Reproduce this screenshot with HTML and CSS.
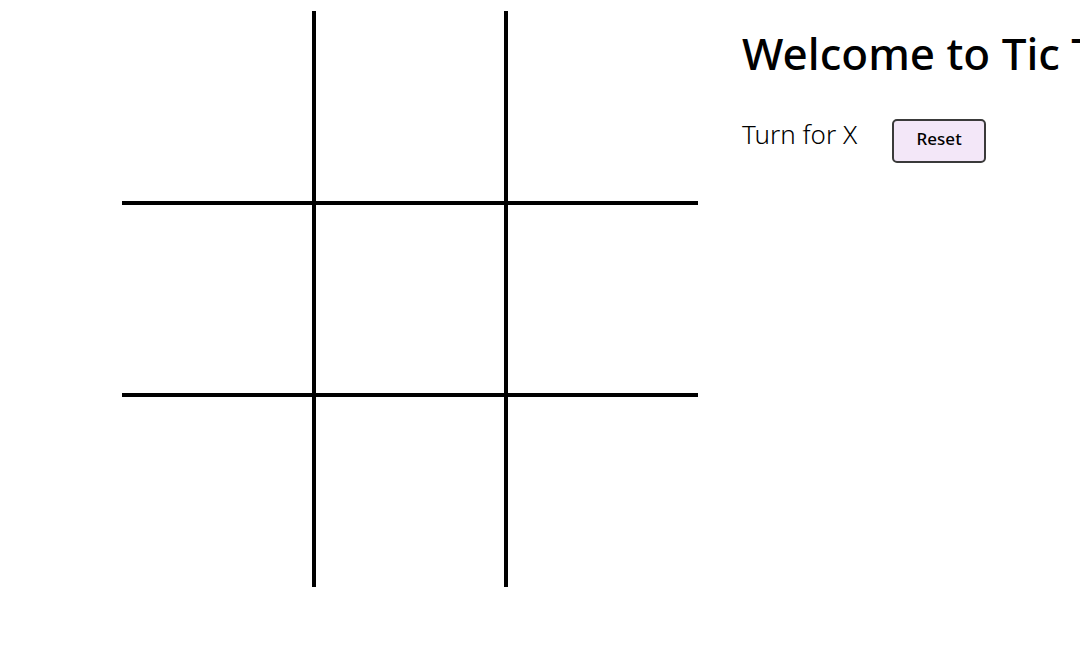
FILE: index.html
```html
<!DOCTYPE html>
<html>
<head>
<meta charset="utf-8">
<link rel="stylesheet" href="styles.css">
</head>
<body>
<div class="page">
  <div class="board">
    <div class="cell c1"></div><div class="cell c2"></div><div class="cell c3"></div>
    <div class="cell c4"></div><div class="cell c5"></div><div class="cell c6"></div>
    <div class="cell c7"></div><div class="cell c8"></div><div class="cell c9"></div>
  </div>
  <div class="info">
    <h1 class="title">Welcome to Tic Tac Toe</h1>
    <div class="status">
      <span class="turn">Turn for X</span>
      <button class="reset">Reset</button>
    </div>
  </div>
</div>
</body>
</html>
```
FILE: styles.css
```css
html, body {
  margin: 0;
  padding: 0;
  background: #fff;
  overflow: hidden;
}
body {
  font-family: "Noto Sans", "Open Sans", sans-serif;
  color: #000;
}
.page {
  display: flex;
  align-items: flex-start;
  padding: 11px 0 0 122px;
  gap: 44px;
  width: 1080px;
  box-sizing: border-box;
}
.board {
  display: grid;
  grid-template-columns: repeat(3, 192px);
  grid-template-rows: repeat(3, 192px);
  flex: none;
}
.cell {
  box-sizing: border-box;
  border: 0 solid #000;
}
.c1 { border-right-width: 2px; border-bottom-width: 2px; }
.c2 { border-left-width: 2px; border-right-width: 2px; border-bottom-width: 2px; }
.c3 { border-left-width: 2px; border-bottom-width: 2px; }
.c4 { border-top-width: 2px; border-right-width: 2px; border-bottom-width: 2px; }
.c5 { border-width: 2px; }
.c6 { border-top-width: 2px; border-left-width: 2px; border-bottom-width: 2px; }
.c7 { border-top-width: 2px; border-right-width: 2px; }
.c8 { border-top-width: 2px; border-left-width: 2px; border-right-width: 2px; }
.c9 { border-top-width: 2px; border-left-width: 2px; }
.info {
  flex: none;
  white-space: nowrap;
}
.title {
  margin: 12px 0 0 0;
  font-size: 44px;
  line-height: 60px;
  font-weight: 500;
  letter-spacing: 0;
}
.status {
  display: flex;
  align-items: flex-start;
  gap: 35px;
  margin-top: 35px;
}
.turn {
  font-size: 26px;
  font-weight: 300;
  line-height: 32px;
}
.reset {
  margin-top: 1px;
  width: 94px;
  height: 44px;
  background: #f3e7f8;
  border: 2px solid #3a3a3a;
  border-radius: 5px;
  font-family: "Noto Sans", sans-serif;
  font-size: 17px;
  font-weight: 500;
  color: #000;
  padding: 0 0 5px 0;
}
```
